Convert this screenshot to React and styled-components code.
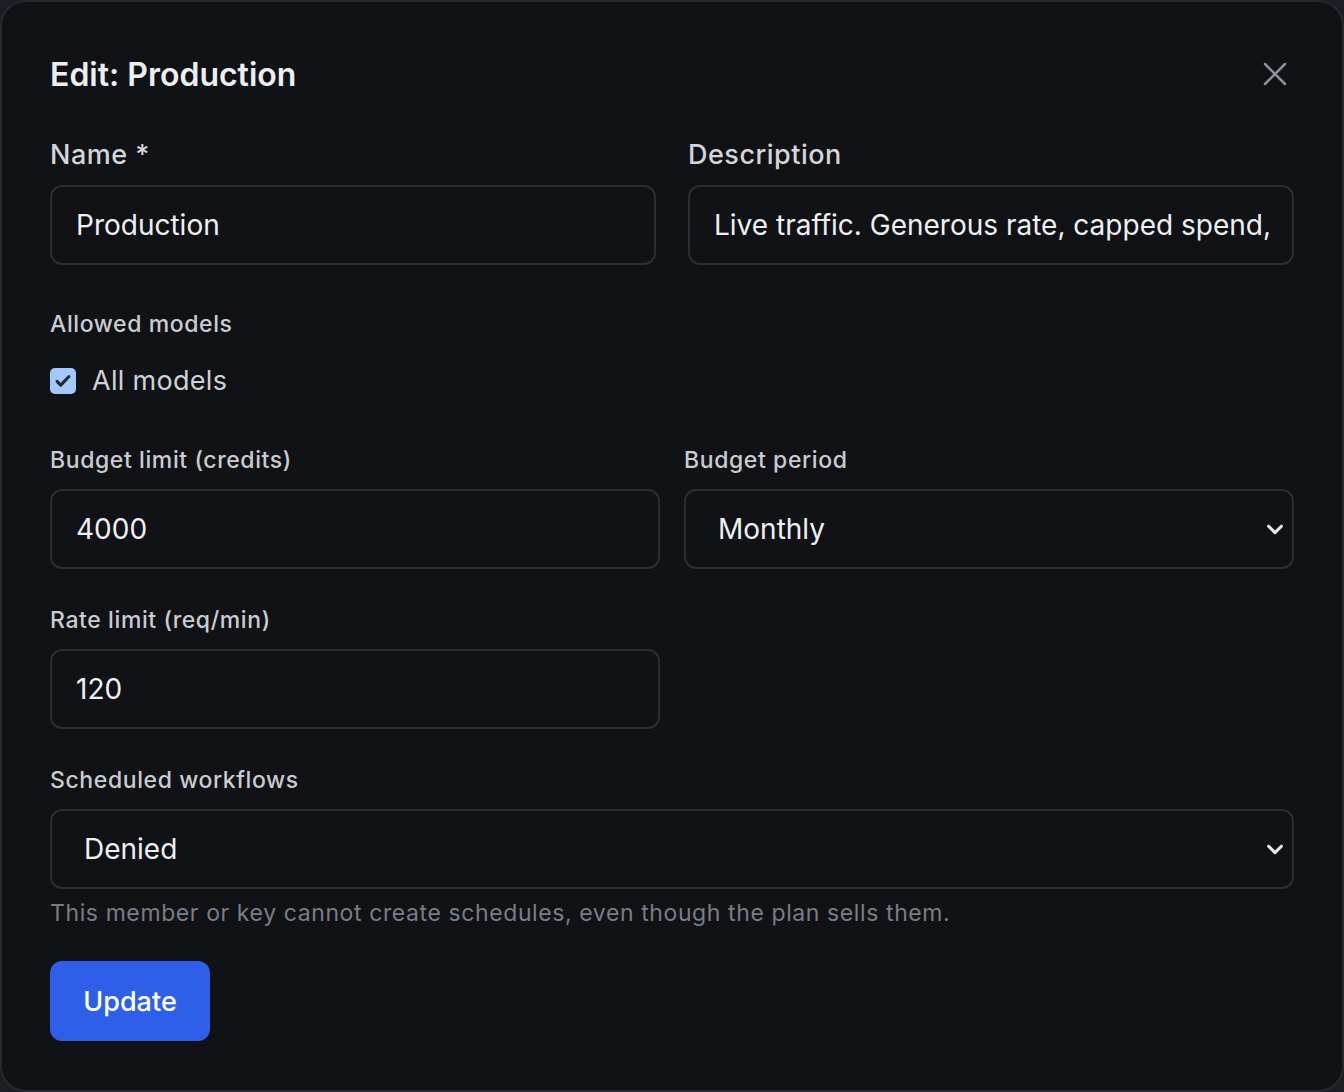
import React from "react";
import styled, { createGlobalStyle } from "styled-components";

const Global = createGlobalStyle`
  * { box-sizing: border-box; }
  html, body { margin: 0; background: #1c1e23; }
  body { font-family: Inter, "Noto Sans", sans-serif; }
`;

const Dialog = styled.div`
  width: 1344px; height: 1092px;
  background: #111216;
  border: 2px solid #262930;
  border-radius: 26px;
  padding: 44px 48px 0 48px;
  color: #e5e7eb;
`;
const Header = styled.div`
  display: flex; justify-content: space-between; align-items: center;
  height: 56px;
`;
const Title = styled.h2`
  margin: 0; font-size: 32px; font-weight: 600; color: #eceef1; letter-spacing: 0px;
`;
const Close = styled.button`
  background: none; border: none; padding: 0; width: 34px; height: 34px;
  display: flex; align-items: center; justify-content: center; color: #8b9099;
  margin-right: 2px;
`;
const Grid = styled.div`
  display: grid; grid-template-columns: minmax(0, 1fr) minmax(0, 1fr); column-gap: ${p => p.$gap || 32}px;
  margin-top: ${p => p.$mt || 0}px;
`;
const Field = styled.div`
  display: flex; flex-direction: column; min-width: 0;
`;
const Label = styled.label`
  font-size: ${p => p.$big ? 27 : 23}px; font-weight: 500; color: ${p => p.$big ? "#d2d5da" : "#c9ccd2"};
  line-height: ${p => p.$big ? 36 : 30}px; margin-bottom: ${p => p.$big ? 12 : 14}px;
  letter-spacing: ${p => p.$big ? 0.5 : 0.6}px;
`;
const Input = styled.div`
  height: 80px; border: 2px solid #2a2e37; border-radius: 12px; background: #111216;
  padding: 0 24px; display: flex; align-items: center; font-size: 28px; color: #eef0f3;
  white-space: nowrap; overflow: hidden; position: relative;
`;
const Select = styled(Input)`
  padding-left: 32px; justify-content: space-between; padding-right: 6px;
`;
const Section = styled.div`
  margin-top: ${p => p.$mt}px;
`;
const CheckRow = styled.div`
  display: flex; align-items: center; gap: 16px; margin-top: 25px;
  font-size: 27px; color: #cfd2d8; letter-spacing: 0.3px;
`;
const Box = styled.span`
  width: 26px; height: 26px; border-radius: 5px; background: #a4c8fb;
  display: flex; align-items: center; justify-content: center;
`;
const Hint = styled.div`
  margin-top: 10px; font-size: 23px; color: #787e88; letter-spacing: 0.6px;
`;
const Button = styled.button`
  margin-top: 34px; height: 80px; width: 160px; border: none; border-radius: 12px;
  background: #2f5fe8; color: #fff; font-family: inherit; font-size: 27px; font-weight: 500;
`;
const Caret = styled.span`
  display: inline-block; width: 2px; height: 16px; background: #9aa0a8; margin-left: 10px;
`;

const Chevron = () => (
  <svg width="22" height="22" viewBox="0 0 24 24" fill="none" stroke="#e5e7eb" strokeWidth="3.4" strokeLinecap="round" strokeLinejoin="round">
    <path d="M5 9l7 7 7-7" />
  </svg>
);

export default function App() {
  return (
    <>
      <Global />
      <Dialog>
        <Header>
          <Title>Edit: Production</Title>
          <Close>
            <svg width="30" height="30" viewBox="0 0 24 24" fill="none" stroke="currentColor" strokeWidth="2" strokeLinecap="round">
              <path d="M4 4l16 16M20 4L4 20" />
            </svg>
          </Close>
        </Header>
        <Grid $mt={35}>
          <Field>
            <Label $big>Name *</Label>
            <Input>Production</Input>
          </Field>
          <Field>
            <Label $big>Description</Label>
            <Input>Live traffic. Generous rate, capped spend,<Caret /></Input>
          </Field>
        </Grid>
        <Section $mt={44}>
          <Label>Allowed models</Label>
          <CheckRow>
            <Box>
              <svg width="18" height="18" viewBox="0 0 24 24" fill="none" stroke="#23262d" strokeWidth="4" strokeLinecap="round" strokeLinejoin="round">
                <path d="M4 12.5l5 5L20 6" />
              </svg>
            </Box>
            All models
          </CheckRow>
        </Section>
        <Grid $gap={24} $mt={48}>
          <Field>
            <Label>Budget limit (credits)</Label>
            <Input>4000</Input>
          </Field>
          <Field>
            <Label>Budget period</Label>
            <Select>Monthly<Chevron /></Select>
          </Field>
        </Grid>
        <Grid $gap={24} $mt={36}>
          <Field>
            <Label>Rate limit (req/min)</Label>
            <Input>120</Input>
          </Field>
          <div />
        </Grid>
        <Section $mt={36}>
          <Field>
            <Label>Scheduled workflows</Label>
            <Select>Denied<Chevron /></Select>
          </Field>
          <Hint>This member or key cannot create schedules, even though the plan sells them.</Hint>
        </Section>
        <Button>Update</Button>
      </Dialog>
    </>
  );
}
